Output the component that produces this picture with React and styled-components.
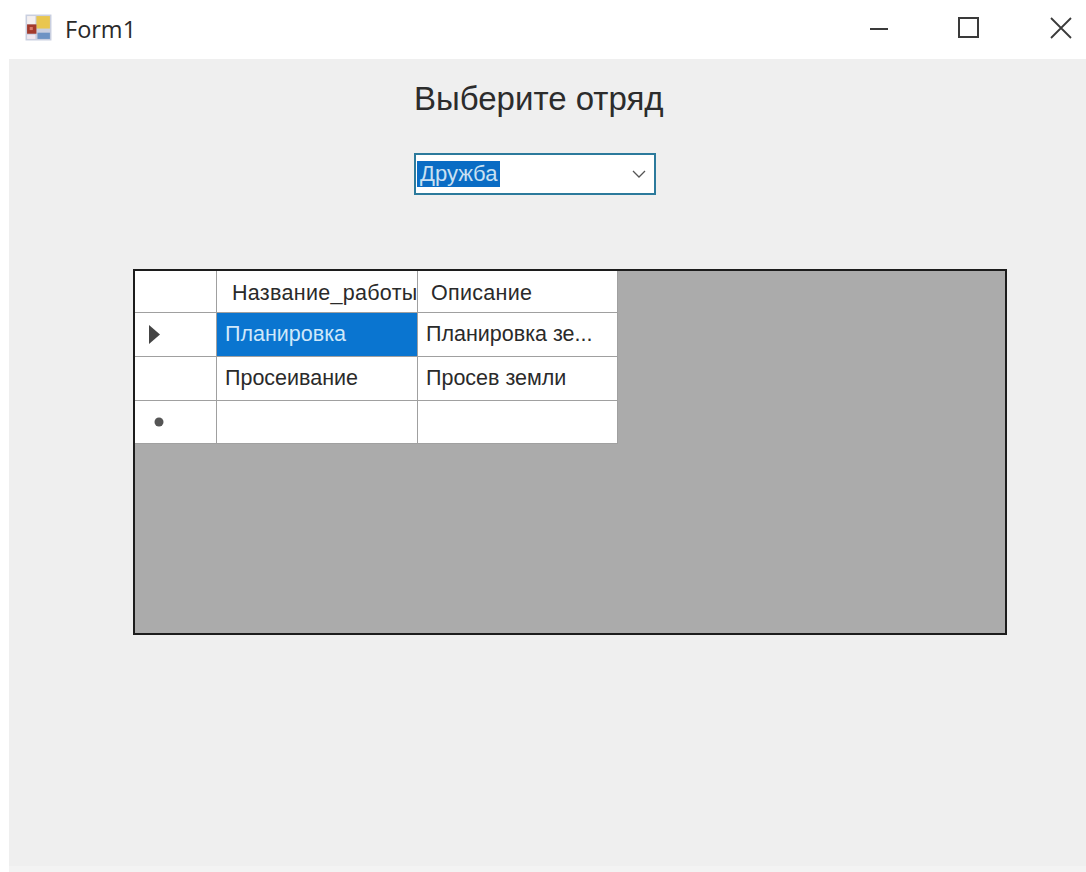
import styled, { createGlobalStyle } from "styled-components";

const GlobalStyle = createGlobalStyle`
  html, body {
    margin: 0;
    padding: 0;
    background: #ffffff;
  }
`;

const Root = styled.div`
  display: flex;
  flex-direction: column;
  width: 1086px;
  height: 872px;
  padding: 0 0 0 9px;
  box-sizing: border-box;
  overflow: hidden;
`;

const TitleBar = styled.div`
  display: flex;
  align-items: center;
  flex: 0 0 59px;
  box-sizing: border-box;
  margin-left: -9px;
  padding: 0 14px 4px 25px;
  background: #fff;
`;

const Title = styled.span`
  margin-left: 13px;
  padding-top: 2px;
  font: 23.5px "Open Sans", "Noto Sans", sans-serif;
  color: #2a2a2a;
  flex: 1;
`;

const WindowButtons = styled.div`
  display: flex;
  align-items: center;
  gap: 70px;
  color: #3a3a3a;
`;

const Client = styled.div`
  flex: 1;
  background: #efefef;
  border-bottom: 6px solid #f3f3f3;
  display: flex;
  flex-direction: column;
  align-items: flex-start;
`;

const Heading = styled.div`
  margin: 18px 0 0 405px;
  font: 33px/44px "Liberation Sans", Arial, sans-serif;
  color: #2c2c2c;
  white-space: nowrap;
`;

const Combo = styled.div`
  display: flex;
  align-items: center;
  justify-content: space-between;
  box-sizing: border-box;
  width: 242px;
  height: 42px;
  margin: 32px 0 0 405px;
  padding: 0 8px 0 1px;
  background: #fff;
  border: 2px solid #2c7a9c;
`;

const ComboText = styled.span`
  padding: 1px 3px;
  background: #0a6cc4;
  color: #c9e0f2;
  font: 22px/24px "Liberation Sans", Arial, sans-serif;
`;

const ComboKey = styled.span`
  text-decoration: underline;
  text-decoration-thickness: 1px;
`;

const GridView = styled.div`
  box-sizing: border-box;
  width: 874px;
  height: 366px;
  margin: 74px 0 0 124px;
  background: #ababab;
  border: 2px solid #1c1c1c;
`;

const Table = styled.div`
  display: grid;
  grid-template-columns: 82px 201px 200px;
  grid-template-rows: 42px 44px 44px 43px;
  width: 483px;
`;

const Cell = styled.div`
  display: flex;
  align-items: center;
  box-sizing: border-box;
  min-width: 0;
  padding-left: 8px;
  background: ${({ $selected }) => ($selected ? "#0a75d0" : "#fff")};
  color: ${({ $selected }) => ($selected ? "#cfe8fa" : "#2a2a2a")};
  border-right: 1px solid #a0a0a0;
  border-bottom: 1px solid #a0a0a0;
  font: 21.5px "Liberation Sans", Arial, sans-serif;
  white-space: nowrap;
  overflow: hidden;
`;

const HeaderCell = styled(Cell)`
  padding-top: 3px;
  padding-left: ${({ $inset }) => $inset}px;
  letter-spacing: 0.3px;
`;

const RowHeader = styled(Cell)`
  padding-left: ${({ $inset }) => $inset || 0}px;
  color: #555;
`;

const AppIcon = () => (
  <svg width="27" height="27" viewBox="0 0 26 26">
    <rect x="0.5" y="0.5" width="25" height="25" fill="#c9cfe0" />
    <rect x="2" y="2" width="8" height="8" fill="#f5f0f0" />
    <rect x="11" y="2" width="13" height="12" fill="#e9c64f" />
    <rect x="2" y="10" width="9" height="9" fill="#a33a2c" />
    <rect x="4.5" y="12.5" width="3" height="3" fill="#d97a6a" />
    <rect x="2" y="20" width="8" height="4" fill="#f0e8f0" />
    <rect x="12" y="18" width="12" height="6" fill="#6d93c4" />
  </svg>
);

const MinimizeIcon = () => (
  <svg width="22" height="22" viewBox="0 0 22 22">
    <path d="M4 12h18" stroke="currentColor" strokeWidth="2" />
  </svg>
);

const MaximizeIcon = () => (
  <svg width="22" height="22" viewBox="0 0 22 22">
    <rect x="1" y="1" width="19" height="19" fill="none" stroke="currentColor" strokeWidth="2" />
  </svg>
);

const CloseIcon = () => (
  <svg width="22" height="22" viewBox="0 0 22 22">
    <path d="M1 1l20 20M21 1L1 21" stroke="currentColor" strokeWidth="1.8" fill="none" />
  </svg>
);

const ChevronIcon = () => (
  <svg width="14" height="8" viewBox="0 0 14 8">
    <path d="M1 1l6 6 6-6" stroke="#555" strokeWidth="1.3" fill="none" />
  </svg>
);

const CurrentRowIcon = () => (
  <svg width="11" height="19" viewBox="0 0 11 19">
    <path d="M0 0l11 9.5L0 19z" fill="#444" />
  </svg>
);

const NewRowIcon = () => (
  <svg width="10" height="10" viewBox="0 0 10 10">
    <circle cx="5" cy="5" r="4.5" fill="#555" />
  </svg>
);

const rows = [
  { marker: <CurrentRowIcon />, inset: 14, name: "Планировка", text: "Планировка зе...", selected: true },
  { name: "Просеивание", text: "Просев земли" },
  { marker: <NewRowIcon />, inset: 19, name: "", text: "" },
];

export default function App() {
  return (
    <>
      <GlobalStyle />
      <Root>
        <TitleBar>
          <AppIcon />
          <Title>Form1</Title>
          <WindowButtons>
            <MinimizeIcon />
            <MaximizeIcon />
            <CloseIcon />
          </WindowButtons>
        </TitleBar>
        <Client>
          <Heading>Выберите отряд</Heading>
          <Combo>
            <ComboText><ComboKey>Д</ComboKey>ружба</ComboText>
            <ChevronIcon />
          </Combo>
          <GridView>
            <Table>
              <RowHeader />
              <HeaderCell $inset={15}>Название_работы</HeaderCell>
              <HeaderCell $inset={13}>Описание</HeaderCell>
              {rows.map((row, i) => [
                <RowHeader key={`m${i}`} $inset={row.inset}>{row.marker}</RowHeader>,
                <Cell key={`n${i}`} $selected={row.selected}>{row.name}</Cell>,
                <Cell key={`t${i}`}>{row.text}</Cell>,
              ])}
            </Table>
          </GridView>
        </Client>
      </Root>
    </>
  );
}
